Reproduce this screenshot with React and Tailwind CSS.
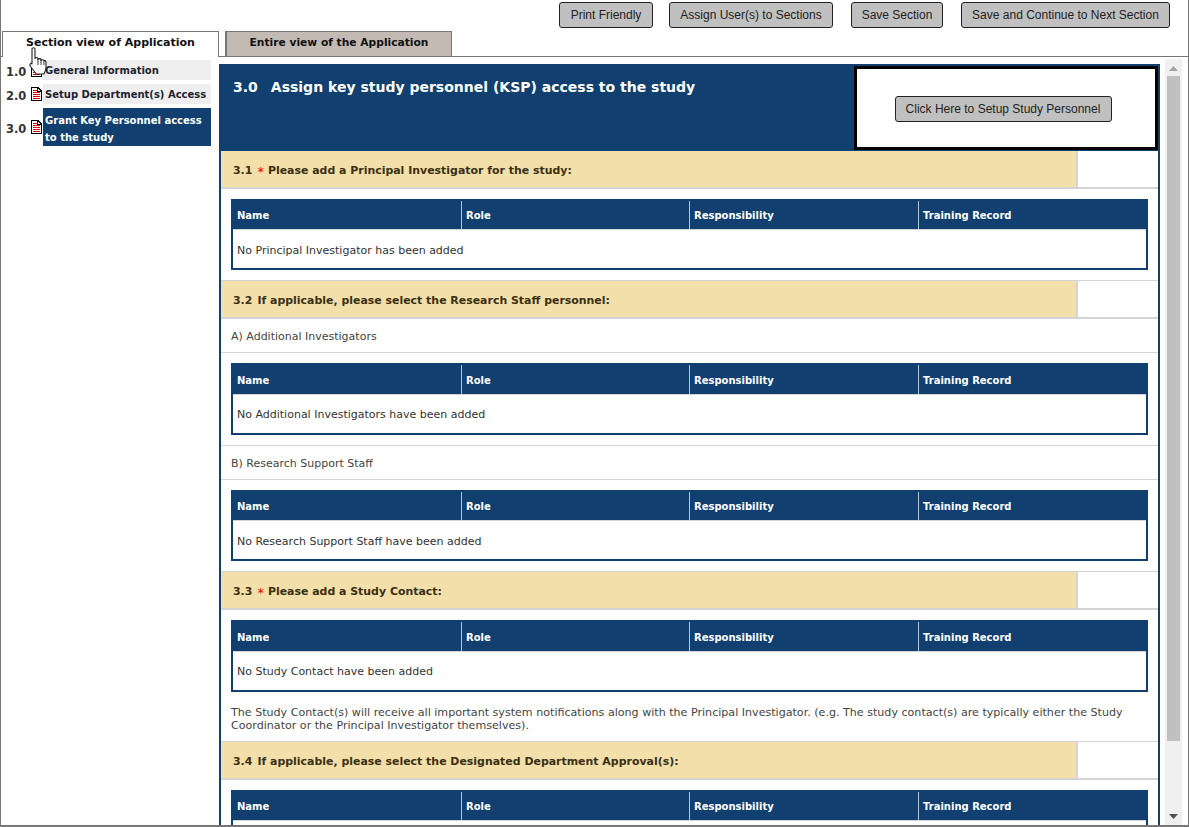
import React from 'react';

const font = "font-['DejaVu_Sans',Verdana,sans-serif]";

const ActionButton = ({ children, className = '' }) => (
    <button className={`h-[26px] rounded-[3px] border border-[#222] bg-[#c0c0c0] text-[12px] text-[#222] font-['Liberation_Sans',Arial,sans-serif] ${className}`}>
        {children}
    </button>
);

const DocIcon = () => (
    <svg width="11" height="14" viewBox="0 0 11 14" shapeRendering="crispEdges" className="shrink-0">
        <path d="M0.5 0.5H7L10.5 4V13.5H0.5Z" fill="#fff" stroke="#000" />
        <path d="M6.5 0.5V4.5H10.5" fill="none" stroke="#000" />
        <rect x="2" y="3" width="4" height="1" fill="#f00000" />
        <rect x="2" y="5" width="7" height="1" fill="#f00000" />
        <rect x="2" y="7" width="7" height="1" fill="#f00000" />
        <rect x="2" y="9" width="7" height="1" fill="#f00000" />
        <rect x="2" y="11" width="7" height="1" fill="#f00000" />
    </svg>
);

const HandCursor = () => (
    <svg width="18" height="28" viewBox="0 0 18 28" className="absolute left-[28px] top-[47px] z-20">
        <path
            d="M3 2C3 0.4 6 0.4 6 2V11.5C6 10.2 9 10.2 9 11.5V12.5C9 11.3 12 11.3 12 12.5V13.5C12 12.4 15 12.4 15 13.8C15 13 17 13.2 17 15V20C17 23 16 24.8 15 27H7C6 24.8 4 23 1.5 19.5C0 17.2 2 15.4 3 17Z"
            fill="#fff"
            stroke="#222"
            strokeWidth="1.1"
            strokeLinejoin="round"
        />
        <path d="M9 12V18M12 12.5V18M15 13.8V18" stroke="#222" strokeWidth="0.9" fill="none" />
    </svg>
);

const NavItem = ({ num, label, active, itemClass }) => (
    <div className={`flex items-center ${itemClass}`}>
        <span className="w-[30px] pl-[5px] pt-[3px] text-[11.5px] leading-[14px] font-bold text-[#333]">{num}</span>
        <span className="flex w-[12px]"><DocIcon /></span>
        <span className={`w-[168px] pl-[2px] text-[10px] font-bold leading-[17px] ${active ? 'bg-[#103f70] text-white pt-[4px]' : 'bg-[#eeeeee] text-[#1c2430] pt-[2px] pb-[1px]'}`}>
            {label}
        </span>
    </div>
);

const SectionHead = ({ num, required, label }) => (
    <div className="flex h-[38px] border-b-2 border-[#d4d4d4]">
        <div className="flex w-[857px] items-center border-r-2 border-[#d4d4d4] bg-[#f2dfa9] pl-[12px] pt-[5px] text-[10.95px] font-bold text-[#3b2f12]">
            <span>{num}</span>
            {required && <span className="ml-[5px] text-[13px] font-normal text-[#e8000b]">*</span>}
            <span className={required ? 'ml-[4px]' : 'ml-[5px]'}>{label}</span>
        </div>
    </div>
);

const PersonTable = ({ message, tall, clip }) => (
    <div className={`mx-[10px] my-[10px] border-2 border-[#103f70] ${clip ? 'mb-0' : ''}`}>
        <div className={`grid grid-cols-[228px_228px_229px_1fr] bg-[#103f70] text-[10px] font-bold text-white ${tall ? 'h-[29px]' : 'h-[28px]'}`}>
            {['Name', 'Role', 'Responsibility', 'Training Record'].map((col, i) => (
                <div key={col} className={`flex items-center pl-[4px] ${tall ? 'pt-[1px]' : ''} ${i > 0 ? 'border-l border-[#b9c6d4]' : ''}`}>
                    {col}
                </div>
            ))}
        </div>
        <div className={`flex h-[39px] items-center border-t border-[#d4d4d4] pl-[4px] text-[11px] text-[#333] ${tall ? 'pt-[3px]' : 'pt-[5px]'}`}>{message}</div>
    </div>
);

const SubHead = ({ children, last }) => (
    <div className={`flex items-center border-b border-[#d4d4d4] pl-[10px] pt-[3px] text-[11px] text-[#444] ${last ? 'h-[35px] border-t' : 'h-[34px]'}`}>
        {children}
    </div>
);

export default function App() {
    return (
        <div className={`${font} relative flex h-[827px] w-[1189px] flex-col overflow-hidden border-x border-b-2 border-[#777] bg-white`}>
            <HandCursor />

            {/* Top buttons */}
            <div className="flex h-[31px] shrink-0 items-start justify-end pt-[2px] pr-[18px]">
                <ActionButton className="w-[94px]">Print Friendly</ActionButton>
                <ActionButton className="ml-[16px] w-[164px]">Assign User(s) to Sections</ActionButton>
                <ActionButton className="ml-[18px] w-[92px]">Save Section</ActionButton>
                <ActionButton className="ml-[18px] w-[209px]">Save and Continue to Next Section</ActionButton>
            </div>

            {/* Tabs */}
            <div className="flex h-[26px] shrink-0 items-end border-b border-[#777] pl-[1px] text-[11px] font-bold">
                <div className="z-10 -mb-px flex h-[26px] w-[217px] items-center justify-center border-x border-t border-[#777] bg-white pb-[3px] text-[#111]">
                    Section view of Application
                </div>
                <div className="ml-[6px] flex h-[25px] w-[227px] items-center justify-center border-l-2 border-r border-t border-[#777] bg-[#c3bab4] pb-[1px] text-[10.7px] text-[#111]">
                    Entire view of the Application
                </div>
            </div>

            <div className="flex min-h-0 flex-1">
                {/* Section list */}
                <div className="w-[218px] shrink-0 pt-[3px]">
                    <NavItem num="1.0" label="General Information" itemClass="mb-[4px]" />
                    <NavItem num="2.0" label="Setup Department(s) Access" itemClass="mb-[4px]" />
                    <NavItem num="3.0" label="Grant Key Personnel access to the study" active />
                </div>

                {/* Section content */}
                <div className="mt-[7px] w-[941px] shrink-0 overflow-hidden border-x-2 border-t-2 border-[#103f70]">
                    <div className="flex h-[85px] bg-[#103f70]">
                        <div className="flex flex-1 gap-[13px] pl-[12px] pt-[11px] text-[14px] font-bold text-white">
                            <span>3.0</span>
                            <span>Assign key study personnel (KSP) access to the study</span>
                        </div>
                        <div className="mb-[1px] flex w-[304px] items-center justify-center border-[3px] border-black bg-white pr-[6px] pt-[2px]">
                            <ActionButton className="w-[217px]">Click Here to Setup Study Personnel</ActionButton>
                        </div>
                    </div>

                    <SectionHead num="3.1" required label="Please add a Principal Investigator for the study:" />
                    <PersonTable message="No Principal Investigator has been added" />

                    <div className="border-t border-[#d4d4d4]" />
                    <SectionHead num="3.2" label="If applicable, please select the Research Staff personnel:" />
                    <SubHead>A) Additional Investigators</SubHead>
                    <PersonTable message="No Additional Investigators have been added" tall />

                    <SubHead last>B) Research Support Staff</SubHead>
                    <PersonTable message="No Research Support Staff have been added" />

                    <div className="border-t border-[#d4d4d4]" />
                    <SectionHead num="3.3" required label="Please add a Study Contact:" />
                    <PersonTable message="No Study Contact have been added" tall />

                    <p className="h-[40px] border-b border-[#d4d4d4] px-[10px] pt-[4px] text-[11.1px] leading-[13px] text-[#444]">
                        The Study Contact(s) will receive all important system notifications along with the Principal Investigator. (e.g. The study contact(s) are typically either the Study Coordinator or the Principal Investigator themselves).
                    </p>
                    <SectionHead num="3.4" label="If applicable, please select the Designated Department Approval(s):" />
                    <PersonTable message="" clip />
                </div>

                {/* Scrollbar */}
                <div className="ml-[5px] mt-[2px] flex w-[17px] flex-col bg-[#f0f0f0]">
                    <div className="flex h-[17px] items-center justify-center pt-[1px]">
                        <svg width="9" height="5" viewBox="0 0 9 5"><path d="M4.5 0L9 5H0Z" fill="#a3a3a3" /></svg>
                    </div>
                    <div className="mx-[2px] h-[665px] bg-[#c0c0c0]" />
                    <div className="flex flex-1 items-end justify-center pb-[6px]">
                        <svg width="9" height="5" viewBox="0 0 9 5"><path d="M0 0H9L4.5 5Z" fill="#505050" /></svg>
                    </div>
                </div>
            </div>
        </div>
    );
}
